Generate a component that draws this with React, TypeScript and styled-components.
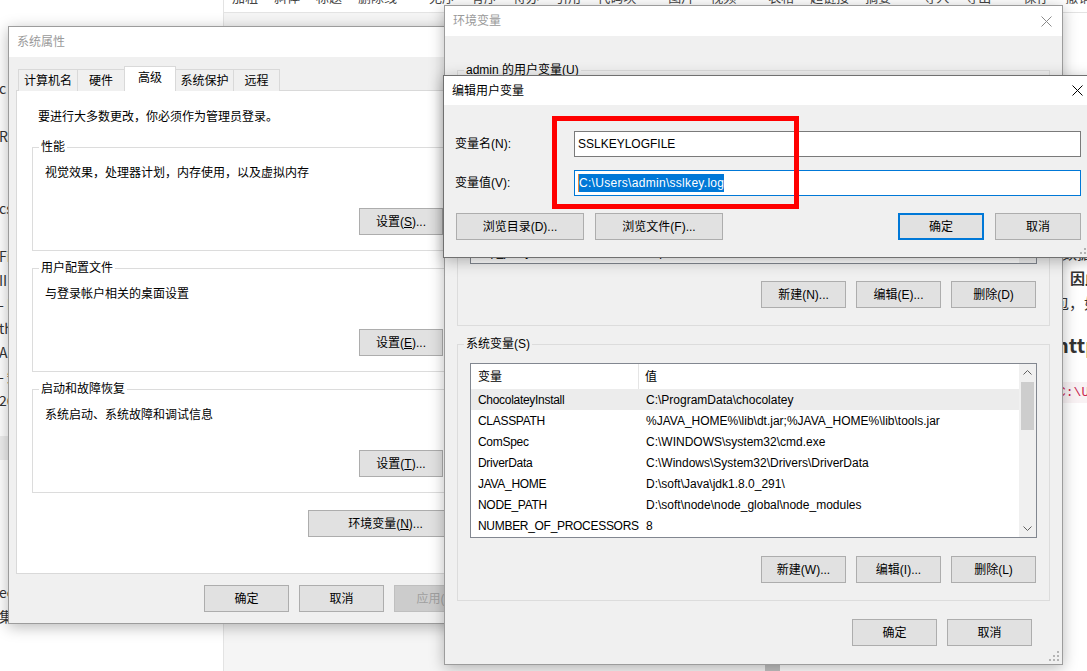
import React from "react";
import styled, { createGlobalStyle } from "styled-components";

const UI = `"Liberation Sans", "Noto Sans CJK SC", sans-serif`;
const CJK = `"Noto Sans CJK SC", "Noto Sans", sans-serif`;

const GlobalStyle = createGlobalStyle`
  html, body { margin: 0; padding: 0; background: #ffffff; }
  body { overflow: hidden; }
  * { box-sizing: border-box; }
`;

const Desktop = styled.div`
  position: relative;
  width: 1087px;
  height: 671px;
  overflow: hidden;
  background: #ffffff;
  font-family: ${UI};
`;

/* ---------- editor page behind the dialogs ---------- */

const Page = styled.div`
  display: flex;
  height: 100%;
`;

const Sidebar = styled.div`
  width: 224px;
  flex-shrink: 0;
  border-right: 1px solid #e3e3e3;
  padding-top: 76px;
  display: flex;
  flex-direction: column;
`;

const SideLine = styled.div<{ $active?: boolean }>`
  height: 24px;
  line-height: 24px;
  font-family: ${CJK};
  font-size: 14px;
  color: #333;
  white-space: nowrap;
  overflow: hidden;
  text-indent: -1px;
  background: ${(p) => (p.$active ? "#eeeeee" : "transparent")};
`;

const Main = styled.div`
  flex: 1;
  display: flex;
  flex-direction: column;
  min-width: 0;
`;

const Toolbar = styled.div`
  height: 13px;
  flex-shrink: 0;
  border-bottom: 1px solid #e3e3e3;
  display: flex;
  gap: 32px;
  padding-left: 8px;
  overflow: hidden;
`;

const ToolGroup = styled.div`
  display: flex;
  gap: 16px;
`;

const ToolItem = styled.span`
  font-family: ${CJK};
  font-size: 13px;
  line-height: 16px;
  margin-top: -11px;
  color: #444;
  white-space: nowrap;
`;

const Workspace = styled.div`
  flex: 1;
  display: flex;
  min-height: 0;
`;

const Editor = styled.div`
  width: 541px;
  background: #f5f5f5;
`;

const EditorScroll = styled.div`
  width: 15px;
  background: #f5f5f5;
  display: flex;
  flex-direction: column;
  justify-content: flex-end;
`;

const ScrollThumb = styled.div`
  height: 40px;
  background: #c1c1c1;
`;

const Preview = styled.div`
  flex: 1;
  display: flex;
  flex-direction: column;
  overflow: hidden;
`;

const PreviewLine = styled.div<{ $indent: number; $gap: number; $bold?: boolean; $size?: number; $lh?: number }>`
  margin-left: ${(p) => p.$indent}px;
  margin-top: ${(p) => p.$gap}px;
  font-family: ${CJK};
  font-size: ${(p) => p.$size ?? 15}px;
  line-height: ${(p) => p.$lh ?? 25}px;
  font-weight: ${(p) => (p.$bold ? 700 : 400)};
  color: #333;
  white-space: nowrap;
`;

const InlineCode = styled.code`
  font-family: "Liberation Mono", monospace;
  font-size: 13px;
  color: #c7254e;
  background: #f9f2f4;
  padding: 3px 4px;
`;

/* ---------- window chrome ---------- */

const Win = styled.div<{ $x: number; $y: number; $w: number; $h: number; $z: number; $active?: boolean }>`
  position: absolute;
  left: ${(p) => p.$x}px;
  top: ${(p) => p.$y}px;
  width: ${(p) => p.$w}px;
  height: ${(p) => p.$h}px;
  z-index: ${(p) => p.$z};
  display: flex;
  flex-direction: column;
  background: #f0f0f0;
  border: 1px solid ${(p) => (p.$active ? "#707070" : "#9c9c9c")};
  box-shadow: 0 3px 14px rgba(0, 0, 0, 0.28);
  font-family: ${UI};
  font-size: 12px;
  color: #000;
`;

const TitleBar = styled.div<{ $active?: boolean; $h: number }>`
  height: ${(p) => p.$h}px;
  flex-shrink: 0;
  background: #ffffff;
  display: flex;
  align-items: center;
  padding-left: 8px;
  font-size: 12px;
  line-height: 16px;
  color: ${(p) => (p.$active ? "#000000" : "#9a9a9a")};
`;

const CloseBox = styled.div`
  margin-left: auto;
  width: 32px;
  height: 100%;
  display: flex;
  align-items: center;
  justify-content: center;
`;

const Grip = styled.svg`
  position: absolute;
  right: 3px;
  bottom: 3px;
`;

const Button = styled.button<{ $w: number; $primary?: boolean; $off?: boolean }>`
  width: ${(p) => p.$w}px;
  height: 27px;
  flex-shrink: 0;
  padding: 0;
  background: ${(p) => (p.$off ? "#cccccc" : "#e1e1e1")};
  border: ${(p) => (p.$primary ? "2px solid #0078d7" : `1px solid ${p.$off ? "#bfbfbf" : "#adadad"}`)};
  color: ${(p) => (p.$off ? "#a0a0a0" : "#000000")};
  font-family: ${UI};
  font-size: 12px;
  line-height: 16px;
`;

const Group = styled.fieldset<{ $gap: number; $pb: number }>`
  margin: ${(p) => p.$gap}px 0 0;
  padding: 0 12px ${(p) => p.$pb}px;
  border: 1px solid #dcdcdc;
  min-width: 0;
  display: flex;
  flex-direction: column;
`;

/* the legend sits inside the fieldset padding, so pull it back to 6px from the border */
const GroupLabel = styled.legend`
  padding: 0 2px;
  margin-left: -6px;
  font-size: 12px;
  line-height: 16px;
`;

const ButtonRow = styled.div<{ $gap: number; $top: number; $right?: number }>`
  display: flex;
  justify-content: flex-end;
  gap: ${(p) => p.$gap}px;
  margin-top: ${(p) => p.$top}px;
  padding-right: ${(p) => p.$right ?? 0}px;
`;

/* ---------- 系统属性 ---------- */

const SysBody = styled.div`
  flex: 1;
  display: flex;
  flex-direction: column;
  padding: 9px 7px 0;
`;

const TabStrip = styled.div`
  display: flex;
  align-items: flex-end;
  height: 25px;
  margin: 0 0 -1px 2px;
  position: relative;
  z-index: 1;
`;

const Tab = styled.div<{ $w: number; $on?: boolean; $noLeft?: boolean; $last?: boolean }>`
  width: ${(p) => p.$w}px;
  height: ${(p) => (p.$on ? 25 : 22)}px;
  display: flex;
  align-items: center;
  justify-content: center;
  padding-bottom: ${(p) => (p.$on ? 3 : 0)}px;
  background: ${(p) => (p.$on ? "#ffffff" : "#f0f0f0")};
  border-top: 1px solid #d9d9d9;
  border-left: ${(p) => (p.$noLeft ? "none" : "1px solid #d9d9d9")};
  border-right: ${(p) => (p.$on || p.$last ? "1px solid #d9d9d9" : "none")};
  font-size: 12px;
  line-height: 16px;
`;

const TabPanel = styled.div`
  height: 484px;
  background: #ffffff;
  border: 1px solid #d9d9d9;
  padding: 0 15px;
  display: flex;
  flex-direction: column;
`;

const Notice = styled.div`
  margin: 18px 0 0 6px;
  line-height: 16px;
`;

const GroupText = styled.div`
  margin-top: 10px;
  line-height: 16px;
`;

/* ---------- variable lists ---------- */

const ListBox = styled.div<{ $top: number }>`
  margin-top: ${(p) => p.$top}px;
  height: 175px;
  display: flex;
  background: #ffffff;
  border: 1px solid #828790;
`;

const ListMain = styled.div`
  flex: 1;
  display: flex;
  flex-direction: column;
  overflow: hidden;
`;

const ListHead = styled.div`
  height: 25px;
  flex-shrink: 0;
  display: grid;
  grid-template-columns: 168px 1fr;
`;

const HeadCell = styled.div<{ $divider?: boolean }>`
  display: flex;
  align-items: center;
  padding-left: ${(p) => (p.$divider ? 7 : 6)}px;
  border-right: ${(p) => (p.$divider ? "1px solid #e5e5e5" : "none")};
  line-height: 16px;
`;

const ListRow = styled.div<{ $selected?: boolean }>`
  height: 21px;
  flex-shrink: 0;
  display: grid;
  grid-template-columns: 168px 1fr;
  align-items: center;
  background: ${(p) => (p.$selected ? "#ececec" : "transparent")};
  white-space: nowrap;
  line-height: 16px;
`;

const NameCell = styled.span`
  padding-left: 7px;
  letter-spacing: -0.3px;
`;

const ValueCell = styled.span`
  padding-left: 7px;
  overflow: hidden;
`;

const ScrollBar = styled.div`
  width: 17px;
  flex-shrink: 0;
  background: #f0f0f0;
  display: flex;
  flex-direction: column;
  align-items: center;
`;

const ScrollArrow = styled.div`
  height: 17px;
  width: 100%;
  display: flex;
  align-items: center;
  justify-content: center;
`;

const ScrollHandle = styled.div`
  width: 13px;
  height: 48px;
  margin-top: 1px;
  background: #cdcdcd;
`;

const ScrollSpace = styled.div`
  flex: 1;
`;

/* ---------- 环境变量 / 编辑用户变量 ---------- */

const EnvBody = styled.div`
  flex: 1;
  display: flex;
  flex-direction: column;
  padding: 26px 12px 0;
`;

const EditBody = styled.div`
  flex: 1;
  display: flex;
  flex-direction: column;
  padding: 26px 12px 0 11px;
`;

const FormRow = styled.div<{ $top: number }>`
  display: flex;
  align-items: center;
  height: 26px;
  margin-top: ${(p) => p.$top}px;
`;

const FormLabel = styled.div`
  width: 119px;
  flex-shrink: 0;
  line-height: 16px;
`;

const TextField = styled.div<{ $focus?: boolean }>`
  flex: 1;
  height: 26px;
  display: flex;
  align-items: center;
  padding-left: 3px;
  background: #ffffff;
  border: 1px solid ${(p) => (p.$focus ? "#0078d7" : "#7a7a7a")};
  line-height: 16px;
  white-space: nowrap;
`;

const Selection = styled.span`
  background: #0078d7;
  color: #ffffff;
  line-height: 18px;
  letter-spacing: 0.3px;
  border-left: 1px solid #e8893a;
`;

const EditButtons = styled.div`
  display: flex;
  gap: 11px;
  margin-top: 17px;
  padding-left: 1px;
`;

const Spacer = styled.div`
  flex: 1;
`;

const Highlight = styled.div`
  position: absolute;
  left: 552px;
  top: 116px;
  width: 247px;
  height: 93px;
  border: 5px solid #ff0000;
  z-index: 10;
`;

/* ---------- data ---------- */

const sideLines: { text: string; active?: boolean }[] = [
  { text: "c V" }, { text: "" }, { text: "RA" }, { text: "" }, { text: "" },
  { text: "cs" }, { text: "" }, { text: "Fic" }, { text: "IIE" }, { text: "- I" },
  { text: "th" }, { text: "Ar" }, { text: "- 知" }, { text: "26" }, { text: "" },
  { text: "", active: true }, { text: "" }, { text: "" }, { text: "" }, { text: "" }, { text: "" },
  { text: "ec" }, { text: "集" },
];

const toolGroups = [
  ["加粗", "斜体", "标题", "删除线"],
  ["无序", "有序", "待办", "引用", "代码块"],
  ["图片", "视频"],
  ["表格", "超链接", "摘要"],
  ["导入", "导出"],
  ["保存", "撤销"],
];

const tabs = [
  { label: "计算机名", w: 59 },
  { label: "硬件", w: 47 },
  { label: "高级", w: 52, on: true },
  { label: "系统保护", w: 57, noLeft: true },
  { label: "远程", w: 47, last: true },
];

const userVars: [string, string][] = [
  ["OneDrive", "C:\\Users\\admin\\OneDrive"],
  ["Path", "C:\\Users\\admin\\AppData\\Local\\Microsoft\\WindowsApps;"],
  ["SSLKEYLOGFILE", "C:\\Users\\admin\\sslkey.log"],
  ["TEMP", "C:\\Users\\admin\\AppData\\Local\\Temp"],
  ["TMP", "C:\\Users\\admin\\AppData\\Local\\Temp"],
  ["ZES_ENABLE", "1"],
  ["http_proxy", "http://127.0.0.1:8888/"],
];

const systemVars: [string, string][] = [
  ["ChocolateyInstall", "C:\\ProgramData\\chocolatey"],
  ["CLASSPATH", "%JAVA_HOME%\\lib\\dt.jar;%JAVA_HOME%\\lib\\tools.jar"],
  ["ComSpec", "C:\\WINDOWS\\system32\\cmd.exe"],
  ["DriverData", "C:\\Windows\\System32\\Drivers\\DriverData"],
  ["JAVA_HOME", "D:\\soft\\Java\\jdk1.8.0_291\\"],
  ["NODE_PATH", "D:\\soft\\node\\node_global\\node_modules"],
  ["NUMBER_OF_PROCESSORS", "8"],
];

/* ---------- small drawings ---------- */

const CloseIcon = ({ color }: { color: string }) => (
  <svg width="11" height="11" viewBox="0 0 11 11">
    <path d="M0.5 0.5 L10.5 10.5 M10.5 0.5 L0.5 10.5" stroke={color} strokeWidth="1" fill="none" />
  </svg>
);

const Chevron = ({ up }: { up?: boolean }) => (
  <svg width="9" height="5" viewBox="0 0 9 5">
    <path d={up ? "M0.5 4.5 L4.5 0.5 L8.5 4.5" : "M0.5 0.5 L4.5 4.5 L8.5 0.5"} stroke="#606060" fill="none" />
  </svg>
);

const ResizeGrip = () => (
  <Grip width="10" height="10" viewBox="0 0 10 10">
    {[[8, 0], [4, 4], [8, 4], [0, 8], [4, 8], [8, 8]].map(([x, y], i) => (
      <rect key={i} x={x} y={y} width="2" height="2" fill="#b4b4b4" />
    ))}
  </Grip>
);

const VarList = ({ rows, top, selected }: { rows: [string, string][]; top: number; selected?: number }) => (
  <ListBox $top={top}>
    <ListMain>
      <ListHead>
        <HeadCell $divider>变量</HeadCell>
        <HeadCell>值</HeadCell>
      </ListHead>
      {rows.map(([name, value], i) => (
        <ListRow key={name} $selected={i === selected}>
          <NameCell>{name}</NameCell>
          <ValueCell>{value}</ValueCell>
        </ListRow>
      ))}
    </ListMain>
    <ScrollBar>
      <ScrollArrow><Chevron up /></ScrollArrow>
      <ScrollHandle />
      <ScrollSpace />
      <ScrollArrow><Chevron /></ScrollArrow>
    </ScrollBar>
  </ListBox>
);

const SettingsGroup = ({ title, text, gap, children }: { title: string; text: string; gap: number; children: React.ReactNode }) => (
  <Group $gap={gap} $pb={15}>
    <GroupLabel>{title}</GroupLabel>
    <GroupText>{text}</GroupText>
    <ButtonRow $gap={0} $top={27} $right={7}>
      <Button $w={84}>{children}</Button>
    </ButtonRow>
  </Group>
);

export default function App() {
  return (
    <Desktop>
      <GlobalStyle />

      <Page>
        <Sidebar>
          {sideLines.map((l, i) => (
            <SideLine key={i} $active={l.active}>{l.text}</SideLine>
          ))}
        </Sidebar>
        <Main>
          <Toolbar>
            {toolGroups.map((g, i) => (
              <ToolGroup key={i}>
                {g.map((t) => <ToolItem key={t}>{t}</ToolItem>)}
              </ToolGroup>
            ))}
          </Toolbar>
          <Workspace>
            <Editor />
            <EditorScroll><ScrollThumb /></EditorScroll>
            <Preview>
              <PreviewLine $indent={282} $gap={56}>数据包的解密</PreviewLine>
              <PreviewLine $indent={282} $gap={146}>数据包</PreviewLine>
              <PreviewLine $indent={290} $gap={0} $bold>因此</PreviewLine>
              <PreviewLine $indent={274} $gap={0}>包，如果</PreviewLine>
              <PreviewLine $indent={276} $gap={15} $bold $size={20} $lh={30}>https</PreviewLine>
              <PreviewLine $indent={274} $gap={17} $lh={26}>
                <InlineCode>C:\Users\admin</InlineCode>
              </PreviewLine>
            </Preview>
          </Workspace>
        </Main>
      </Page>

      {/* 系统属性 */}
      <Win $x={8} $y={26} $w={479} $h={598} $z={1}>
        <TitleBar $h={30}>系统属性</TitleBar>
        <SysBody>
          <TabStrip>
            {tabs.map((t) => (
              <Tab key={t.label} $w={t.w} $on={t.on} $noLeft={t.noLeft} $last={t.last}>{t.label}</Tab>
            ))}
          </TabStrip>
          <TabPanel>
            <Notice>要进行大多数更改，你必须作为管理员登录。</Notice>
            <SettingsGroup title="性能" text="视觉效果，处理器计划，内存使用，以及虚拟内存" gap={14}>
              设置(<u>S</u>)...
            </SettingsGroup>
            <SettingsGroup title="用户配置文件" text="与登录帐户相关的桌面设置" gap={9}>
              设置(<u>E</u>)...
            </SettingsGroup>
            <SettingsGroup title="启动和故障恢复" text="系统启动、系统故障和调试信息" gap={9}>
              设置(<u>T</u>)...
            </SettingsGroup>
            <ButtonRow $gap={0} $top={17}>
              <Button $w={155}>环境变量(<u>N</u>)...</Button>
            </ButtonRow>
          </TabPanel>
          <ButtonRow $gap={10} $top={11}>
            <Button $w={85}>确定</Button>
            <Button $w={85}>取消</Button>
            <Button $w={85} $off>应用(<u>A</u>)</Button>
          </ButtonRow>
        </SysBody>
      </Win>

      {/* 环境变量 */}
      <Win $x={444} $y={5} $w={619} $h={660} $z={2}>
        <TitleBar $h={30}>
          环境变量
          <CloseBox><CloseIcon color="#8a8a8a" /></CloseBox>
        </TitleBar>
        <EnvBody>
          <Group $gap={0} $pb={17}>
            <GroupLabel>admin 的用户变量(U)</GroupLabel>
            <VarList rows={userVars} top={11} />
            <ButtonRow $gap={10} $top={17} $right={1}>
              <Button $w={85}>新建(N)...</Button>
              <Button $w={85}>编辑(E)...</Button>
              <Button $w={85}>删除(D)</Button>
            </ButtonRow>
          </Group>
          <Group $gap={10} $pb={17}>
            <GroupLabel>系统变量(S)</GroupLabel>
            <VarList rows={systemVars} top={11} selected={0} />
            <ButtonRow $gap={10} $top={18} $right={1}>
              <Button $w={85}>新建(W)...</Button>
              <Button $w={85}>编辑(I)...</Button>
              <Button $w={85}>删除(L)</Button>
            </ButtonRow>
          </Group>
          <ButtonRow $gap={10} $top={18} $right={18}>
            <Button $w={85}>确定</Button>
            <Button $w={85}>取消</Button>
          </ButtonRow>
        </EnvBody>
        <ResizeGrip />
      </Win>

      {/* 编辑用户变量 */}
      <Win $x={443} $y={75} $w={651} $h={183} $z={3} $active>
        <TitleBar $h={29} $active>
          编辑用户变量
          <CloseBox><CloseIcon color="#000000" /></CloseBox>
        </TitleBar>
        <EditBody>
          <FormRow $top={0}>
            <FormLabel>变量名(N):</FormLabel>
            <TextField>SSLKEYLOGFILE</TextField>
          </FormRow>
          <FormRow $top={13}>
            <FormLabel>变量值(V):</FormLabel>
            <TextField $focus>
              <Selection>C:\Users\admin\sslkey.log</Selection>
            </TextField>
          </FormRow>
          <EditButtons>
            <Button $w={128}>浏览目录(D)...</Button>
            <Button $w={128}>浏览文件(F)...</Button>
            <Spacer />
            <Button $w={86} $primary>确定</Button>
            <Button $w={86}>取消</Button>
          </EditButtons>
        </EditBody>
        <ResizeGrip />
      </Win>

      <Highlight />
    </Desktop>
  );
}
